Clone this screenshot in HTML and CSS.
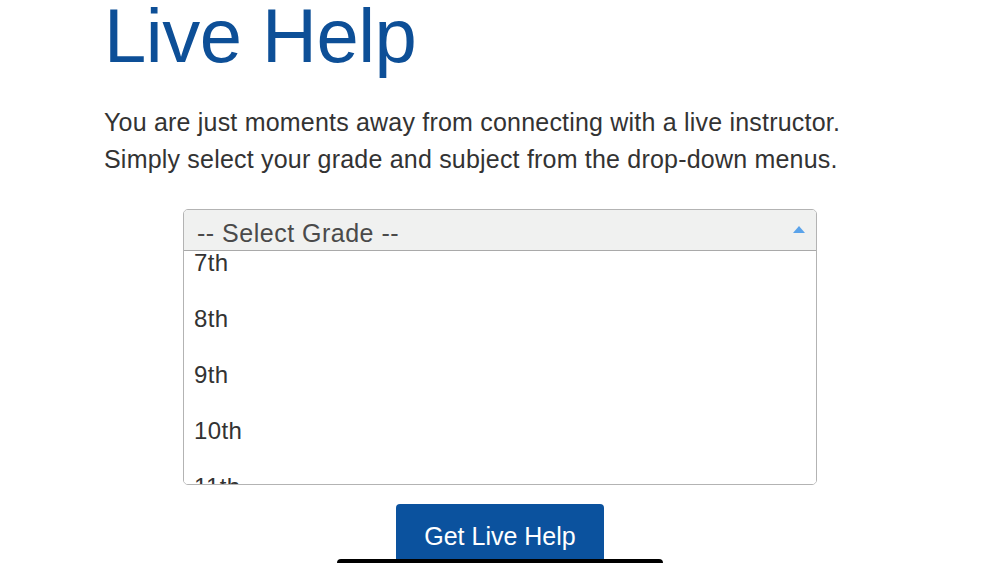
FILE: index.html
```html
<!DOCTYPE html>
<html lang="en">
<head>
<meta charset="utf-8">
<title>Live Help</title>
<link rel="stylesheet" href="styles.css">
</head>
<body>
<main class="page">
  <h1 class="title">Live Help</h1>
  <p class="intro">You are just moments away from connecting with a live instructor.<br>Simply select your grade and subject from the drop-down menus.</p>
  <div class="select">
    <div class="select-head">
      <span>-- Select Grade --</span>
      <span class="arrow"></span>
    </div>
    <div class="select-list">
      <ul class="options">
        <li>7th</li>
        <li>8th</li>
        <li>9th</li>
        <li>10th</li>
        <li>11th</li>
        <li>12th</li>
      </ul>
    </div>
  </div>
  <div class="actions">
    <button class="btn" type="button">Get Live Help</button>
  </div>
</main>
<div class="homebar"></div>
</body>
</html>
```
FILE: styles.css
```css
html, body {
  margin: 0;
  padding: 0;
  background: #fff;
  height: 563px;
  overflow: hidden;
}
body {
  font-family: "Liberation Sans", Arial, sans-serif;
  color: #333;
}
.page {
  width: 792px;
  margin: 0 auto;
  display: flex;
  flex-direction: column;
}
.title {
  margin: 0;
  font-size: 76px;
  line-height: 72px;
  font-weight: 400;
  color: #0d4f97;
  letter-spacing: -0.5px;
}
.intro {
  margin: 32px 0 0;
  font-size: 25px;
  line-height: 37px;
  letter-spacing: 0.2px;
  color: #333;
  white-space: nowrap;
}
.select {
  margin: 31px auto 0;
  width: 634px;
  box-sizing: border-box;
  border: 1px solid #b3b3b3;
  border-radius: 5px;
  overflow: hidden;
}
.select-head {
  display: flex;
  align-items: center;
  justify-content: space-between;
  background: #f0f1f0;
  border-bottom: 1px solid #a9a9a9;
  padding: 6px 11px 0 13px;
  height: 41px;
  box-sizing: border-box;
  font-size: 25px;
  letter-spacing: 0.5px;
  line-height: 34px;
  color: #4a4a4a;
}
.arrow {
  width: 0;
  height: 0;
  border-left: 6px solid transparent;
  border-right: 6px solid transparent;
  border-bottom: 7px solid #5aa3ea;
  margin-top: -8px;
}
.select-list {
  height: 233px;
  overflow: hidden;
  background: #fff;
}
.options {
  list-style: none;
  margin: -16px 0 0;
  padding: 0;
}
.options li {
  height: 56px;
  line-height: 56px;
  font-size: 24px;
  letter-spacing: 0.4px;
  padding-left: 10px;
  color: #333;
}
.actions {
  display: flex;
  justify-content: center;
  margin-top: 19px;
}
.btn {
  width: 208px;
  height: 70px;
  border: none;
  border-radius: 4px;
  background: #0b529e;
  color: #fff;
  font-family: "Liberation Sans", Arial, sans-serif;
  font-size: 25px;
  padding: 0 0 6px;
}
.homebar {
  position: fixed;
  left: 337px;
  bottom: 0;
  width: 326px;
  height: 4px;
  background: #000;
  border-radius: 6px 6px 0 0;
}
```
